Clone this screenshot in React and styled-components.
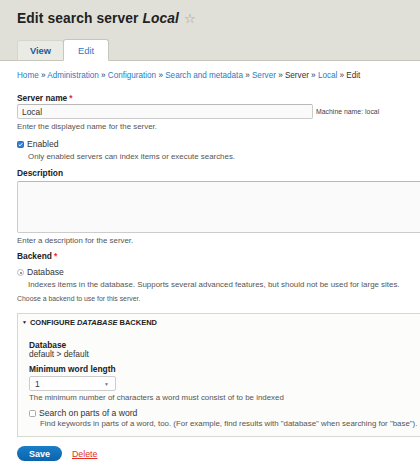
import React from 'react'
import styled, { createGlobalStyle } from 'styled-components'

const Global = createGlobalStyle`
  html, body {
    margin: 0;
    padding: 0;
    background: #fff;
    overflow: hidden;
  }
  body {
    font-family: "Liberation Sans", Arial, sans-serif;
    color: #222;
    width: 420px;
    height: 470px;
  }
`

const Header = styled.header`
  background: #e0e0d8;
  border-bottom: 1px solid #c6c6bd;
  padding: 8px 0 0 17px;
  height: 52px;
  display: flex;
  flex-direction: column;
  justify-content: space-between;
`

const Title = styled.h1`
  margin: 0;
  font-size: 13.8px;
  font-weight: bold;
  color: #222;
  line-height: 22px;
  display: flex;
  align-items: center;
  letter-spacing: 0.1px;
  em {
    font-style: italic;
    margin-left: 4px;
  }
`

const Star = styled.span`
  margin-left: 5px;
  font-family: "DejaVu Sans", sans-serif;
  font-size: 13px;
  color: #999;
  font-weight: normal;
`

const Tabs = styled.nav`
  display: flex;
  margin-bottom: -1px;
`

const Tab = styled.a`
  display: flex;
  align-items: center;
  justify-content: center;
  width: ${p => p.$w}px;
  height: ${p => (p.$active ? 22 : 21)}px;
  box-sizing: border-box;
  background: ${p => (p.$active ? '#fff' : '#ebebe6')};
  border: 1px solid ${p => (p.$active ? '#c6c6bd' : '#d6d6cf')};
  border-bottom: ${p => (p.$active ? '1px solid #fff' : '1px solid #c6c6bd')};
  border-radius: 3px 3px 0 0;
  font-size: 9.4px;
  color: ${p => (p.$active ? '#2a7bc6' : '#1e5c99')};
  font-weight: ${p => (p.$active ? 'normal' : 'bold')};
  text-decoration: none;
  align-self: flex-end;
  margin-left: ${p => (p.$active ? -1 : 0)}px;
`

const Main = styled.main`
  padding: 9px 17px 0 17px;
  width: 460px;
`

const Crumbs = styled.div`
  font-size: 8.15px;
  line-height: 11px;
  color: #333;
  margin-bottom: 12px;
  white-space: nowrap;
  a {
    color: #2a7bc6;
    text-decoration: none;
  }
`

const Label = styled.div`
  font-size: 8.4px;
  font-weight: bold;
  line-height: ${p => p.$lh ?? 11}px;
  color: #222;
  margin-bottom: ${p => p.$mb ?? 0}px;
  span {
    color: #e12d2d;
    margin-left: 2px;
  }
`

const Row = styled.div`
  display: flex;
  align-items: center;
  gap: 3px;
  height: ${p => p.$h ?? 11}px;
`

const TextInput = styled.div`
  width: 296px;
  height: 15px;
  box-sizing: border-box;
  border: 1px solid #ccc;
  border-top-color: #b8b8b8;
  border-radius: 2px;
  background: #fafafa;
  font-size: 8.4px;
  padding-left: 4px;
  display: flex;
  align-items: center;
  color: #333;
`

const Machine = styled.span`
  font-size: 6.9px;
  color: #444;
`

const Help = styled.div`
  font-size: ${p => p.$size ?? 7.9}px;
  line-height: 11px;
  color: #555;
  margin-top: ${p => p.$mt ?? 2}px;
  margin-left: ${p => p.$ml ?? 0}px;
  white-space: nowrap;
`

const Field = styled.div`
  margin-bottom: ${p => p.$mb ?? 9}px;
`

const Check = styled.span`
  width: 7px;
  height: 7px;
  box-sizing: border-box;
  border-radius: 1.5px;
  background: ${p => (p.$on ? '#2f7fd6' : '#fff')};
  border: 1px solid ${p => (p.$on ? '#2a72c0' : '#aaa')};
  display: inline-flex;
  align-items: center;
  justify-content: center;
  flex-shrink: 0;
`

const Radio = styled.span`
  width: 7px;
  height: 7px;
  box-sizing: border-box;
  border-radius: 50%;
  border: 1px solid #bbb;
  display: inline-flex;
  align-items: center;
  justify-content: center;
  &::after {
    content: '';
    width: 2px;
    height: 2px;
    border-radius: 50%;
    background: #777;
  }
`

const OptionText = styled.span`
  font-size: 8.6px;
  color: #333;
  line-height: 11px;
`

const TextArea = styled.div`
  height: 52px;
  box-sizing: border-box;
  border: 1px solid #ccc;
  border-top-color: #b8b8b8;
  border-radius: 2px;
  background: #fafafa;
`

const Fieldset = styled.section`
  border: 1px solid #d8d8d2;
  background: #fcfcfa;
  padding: 3.5px 11px 7.5px 11px;
  margin-top: 8.5px;
`

const Legend = styled.div`
  font-size: 7.5px;
  font-weight: bold;
  text-transform: uppercase;
  color: #222;
  line-height: 11px;
  display: flex;
  align-items: center;
  gap: 3px;
  margin-left: -7px;
  margin-bottom: 12px;
  em {
    font-style: italic;
    margin: 0 2px;
  }
`

const Triangle = styled.span`
  font-size: 5px;
`

const Value = styled.div`
  font-size: 8.4px;
  color: #333;
  line-height: 10px;
  margin-top: -1px;
`

const Select = styled.div`
  width: 87px;
  height: 15px;
  box-sizing: border-box;
  border: 1px solid #ccc;
  border-radius: 2px;
  background: #fff;
  display: flex;
  align-items: center;
  justify-content: space-between;
  padding: 0 6px 0 5px;
  font-size: 8.4px;
  color: #333;
  span {
    font-size: 5px;
    color: #777;
  }
`

const Actions = styled.div`
  display: flex;
  align-items: center;
  gap: 10px;
  margin-top: 9px;
`

const SaveButton = styled.button`
  width: 45px;
  height: 15px;
  border: none;
  border-radius: 8px;
  background: linear-gradient(#1b7ec8, #0a64ad);
  color: #fff;
  font-family: inherit;
  font-size: 9px;
  font-weight: bold;
  padding: 0;
`

const DeleteLink = styled.a`
  color: #e0321e;
  font-size: 8.8px;
  text-decoration: underline;
`

const CheckMark = () => (
  <svg width="5" height="5" viewBox="0 0 10 10">
    <path d="M1.5 5.2 L4 7.6 L8.6 2.4" stroke="#fff" strokeWidth="2" fill="none" />
  </svg>
)

export default function App() {
  return (
    <>
      <Global />
      <Header>
        <Title>
          Edit search server <em>Local</em>
          <Star>☆</Star>
        </Title>
        <Tabs>
          <Tab $w={47}>View</Tab>
          <Tab $w={46} $active>Edit</Tab>
        </Tabs>
      </Header>
      <Main>
        <Crumbs>
          <a href="#">Home</a> » <a href="#">Administration</a> » <a href="#">Configuration</a> »{' '}
          <a href="#">Search and metadata</a> » <a href="#">Server</a> » Server » <a href="#">Local</a> » Edit
        </Crumbs>

        <Field $mb={7}>
          <Label>Server name<span>*</span></Label>
          <Row $h={15}>
            <TextInput>Local</TextInput>
            <Machine>Machine name: local</Machine>
          </Row>
          <Help>Enter the displayed name for the server.</Help>
        </Field>

        <Field $mb={6}>
          <Row>
            <Check $on><CheckMark /></Check>
            <OptionText>Enabled</OptionText>
          </Row>
          <Help $ml={11} $mt={1}>Only enabled servers can index items or execute searches.</Help>
        </Field>

        <Field $mb={5}>
          <Label $mb={1.5}>Description</Label>
          <TextArea />
          <Help $mt={2.5}>Enter a description for the server.</Help>
        </Field>

        <Field $mb={0}>
          <Label $mb={5}>Backend<span>*</span></Label>
          <Row>
            <Radio />
            <OptionText>Database</OptionText>
          </Row>
          <Help $ml={11} $mt={1}>Indexes items in the database. Supports several advanced features, but should not be used for large sites.</Help>
          <Help $size={6.9} $mt={3}>Choose a backend to use for this server.</Help>
        </Field>

        <Fieldset>
          <Legend>
            <Triangle>▼</Triangle>
            <span>Configure<em>Database</em>Backend</span>
          </Legend>
          <Field $mb={4.5}>
            <Label $lh={10}>Database</Label>
            <Value>default &gt; default</Value>
          </Field>
          <Field $mb={5}>
            <Label $mb={1.5}>Minimum word length</Label>
            <Select>1<span>▼</span></Select>
            <Help $mt={0.5}>The minimum number of characters a word must consist of to be indexed</Help>
          </Field>
          <Field $mb={0}>
            <Row>
              <Check />
              <OptionText>Search on parts of a word</OptionText>
            </Row>
            <Help $ml={11} $mt={-1}>Find keywords in parts of a word, too. (For example, find results with "database" when searching for "base").</Help>
          </Field>
        </Fieldset>

        <Actions>
          <SaveButton>Save</SaveButton>
          <DeleteLink href="#">Delete</DeleteLink>
        </Actions>
      </Main>
    </>
  )
}
